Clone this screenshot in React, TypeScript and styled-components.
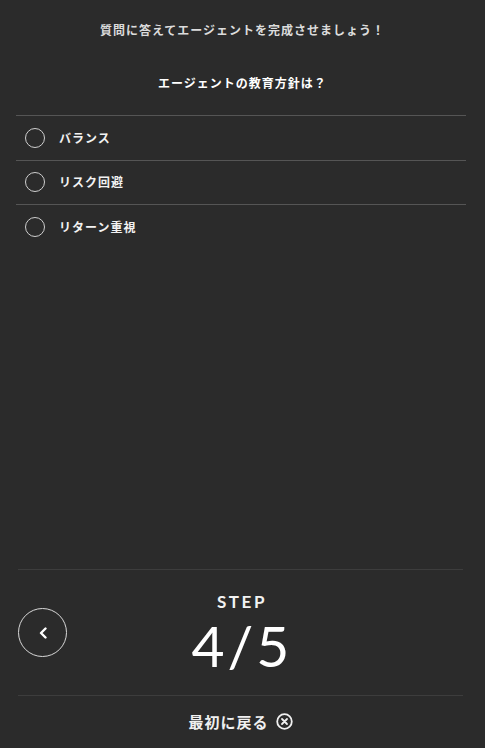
import React from "react";
import styled, { createGlobalStyle } from "styled-components";

const Global = createGlobalStyle`
  html, body { margin: 0; padding: 0; background: #2b2b2b; }
  body { font-family: "Noto Sans CJK JP", "Noto Sans", sans-serif; }
  * { box-sizing: border-box; }
`;

const Page = styled.div`
  min-height: 748px;
  display: flex;
  flex-direction: column;
  background: #2b2b2b;
  color: #fff;
`;

const Lead = styled.p`
  margin: 0;
  padding-top: 22px;
  text-align: center;
  font-size: 12px;
  line-height: 16px;
  font-weight: 700;
  letter-spacing: 1px;
  color: #dcdcdc;
`;

const Question = styled.h2`
  margin: 37px 0 0;
  text-align: center;
  font-size: 12px;
  line-height: 16px;
  font-weight: 700;
  letter-spacing: 1px;
  color: #fff;
`;

const OptionList = styled.ul`
  list-style: none;
  margin: 24px 19px 0 16px;
  padding: 0;
`;

const OptionRow = styled.li`
  display: flex;
  align-items: center;
  height: 44.5px;
  border-top: 1px solid #555;
  padding-left: 9px;
  gap: 14px;
`;

const Radio = styled.span`
  width: 20px;
  height: 20px;
  border-radius: 50%;
  border: 1.5px solid #cfcfcf;
  flex-shrink: 0;
`;

const OptionLabel = styled.span`
  font-size: 12px;
  font-weight: 700;
  letter-spacing: 1px;
  color: #f2f2f2;
  line-height: 16px;
`;

const Footer = styled.footer`
  margin: auto 22px 0 18px;
  border-top: 1px solid #3d3d3d;
`;

const StepRow = styled.div`
  display: grid;
  grid-template-columns: 49px 1fr 49px;
  align-items: center;
  height: 126px;
  border-bottom: 1px solid #3d3d3d;
`;

const BackButton = styled.button`
  width: 49px;
  height: 49px;
  border-radius: 50%;
  border: 1.5px solid #d8d8d8;
  background: transparent;
  display: flex;
  align-items: center;
  justify-content: center;
  padding: 0;
  color: #fff;
  cursor: pointer;
`;

const StepBlock = styled.div`
  display: flex;
  flex-direction: column;
  align-items: center;
  padding-top: 0px;
`;

const StepLabel = styled.div`
  font-family: "Lato", "Open Sans", sans-serif;
  font-size: 17px;
  font-weight: 700;
  letter-spacing: 2.6px;
  line-height: 20px;
  color: #f2f2f2;
  padding-left: 3px;
`;

const StepCount = styled.div`
  font-family: "Lato", "Open Sans", sans-serif;
  font-size: 57px;
  font-weight: 400;
  line-height: 57px;
  margin-top: 5px;
  color: #fff;
  letter-spacing: 3px;
  padding-left: 3px;
`;

const Restart = styled.a`
  display: flex;
  align-items: center;
  justify-content: center;
  gap: 7px;
  height: 52px;
  font-size: 15px;
  font-weight: 700;
  letter-spacing: 1px;
  color: #f0f0f0;
  text-decoration: none;
  padding-bottom: 2px;
`;

const Chevron = () => (
  <svg width="10" height="12" viewBox="0 0 10 12" fill="none">
    <path d="M7.5 1.5L3 6l4.5 4.5" stroke="#fff" strokeWidth="2.4" strokeLinecap="round" strokeLinejoin="round" />
  </svg>
);

const CircleX = () => (
  <svg width="17" height="17" viewBox="0 0 17 17" fill="none">
    <circle cx="8.5" cy="8.5" r="7.3" stroke="#f0f0f0" strokeWidth="1.8" />
    <path d="M6 6l5 5M11 6l-5 5" stroke="#f0f0f0" strokeWidth="1.8" strokeLinecap="round" />
  </svg>
);

const options = ["バランス", "リスク回避", "リターン重視"];

export default function App() {
  return (
    <>
      <Global />
      <Page>
        <Lead>質問に答えてエージェントを完成させましょう！</Lead>
        <Question>エージェントの教育方針は？</Question>
        <OptionList>
          {options.map((o) => (
            <OptionRow key={o}>
              <Radio />
              <OptionLabel>{o}</OptionLabel>
            </OptionRow>
          ))}
        </OptionList>
        <Footer>
          <StepRow>
            <BackButton aria-label="戻る">
              <Chevron />
            </BackButton>
            <StepBlock>
              <StepLabel>STEP</StepLabel>
              <StepCount>4/5</StepCount>
            </StepBlock>
            <span />
          </StepRow>
          <Restart href="#">
            最初に戻る
            <CircleX />
          </Restart>
        </Footer>
      </Page>
    </>
  );
}
